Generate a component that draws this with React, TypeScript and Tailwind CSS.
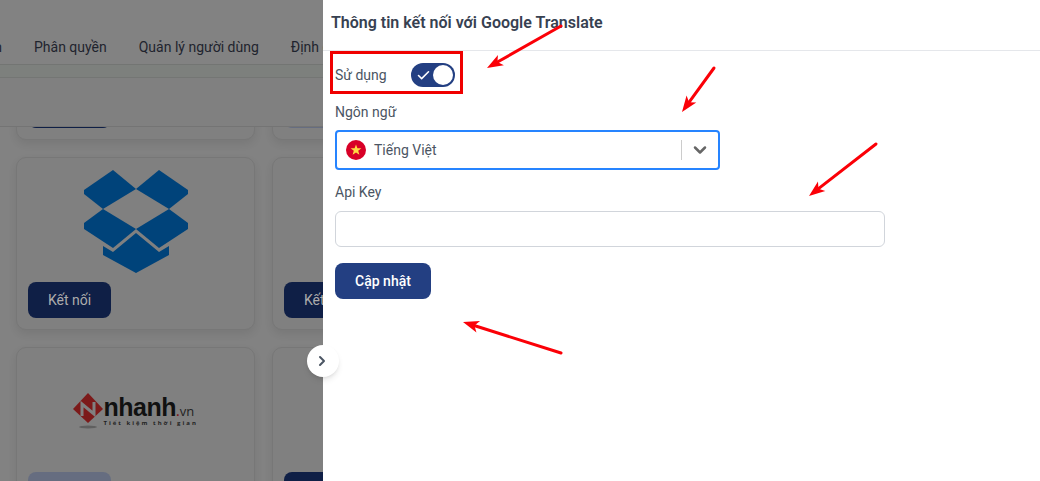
import React from "react";
import { Check, ChevronDown, ChevronRight } from "lucide-react";

const font = { fontFamily: "Roboto, sans-serif" };

function Dropbox() {
  return (
    <svg width="104" height="104" viewBox="0 0 104 104" fill="#00437a">
      <polygon points="29,0 0,20 0,24 19,39 52,19" />
      <polygon points="75,0 52,19 85,39 104,24 104,20" />
      <polygon points="19,39 0,53 0,59 29,78 52,59" />
      <polygon points="85,39 52,59 75,78 104,59 104,53" />
      <polygon points="52,63 29,82 19,76 19,85 52,103 85,85 85,76 75,82" />
    </svg>
  );
}

function Nhanh() {
  return (
    <div className="flex items-start" style={{ width: 126 }}>
      <svg width="31" height="37" viewBox="0 0 31 37" className="shrink-0">
        <polygon points="15,0 30,16 15,30 0,16" fill="#7c1a1a" />
        <path d="M9,23 L9,11 L21,21 L21,9" fill="none" stroke="#808080" strokeWidth="3" />
        <ellipse cx="15" cy="34" rx="9" ry="1.5" fill="#5f5f5f" />
      </svg>
      <div className="flex flex-col pt-[2px]">
        <div className="flex items-baseline h-[24px] leading-[24px] text-[#111111]">
          <span className="text-[25px] font-bold tracking-[-0.5px]" style={{ fontFamily: "'Liberation Sans', sans-serif" }}>nhanh</span>
          <span className="text-[13px] text-[#7c1a1a] font-bold">.</span>
          <span className="text-[13px] text-[#222222]" style={{ fontFamily: "'Open Sans', sans-serif" }}>vn</span>
        </div>
        <span className="text-[6px] leading-[8px] font-bold tracking-[2px] text-[#222222] whitespace-nowrap" style={{ fontFamily: "'Open Sans', sans-serif" }}>Tiết kiệm thời gian</span>
      </div>
    </div>
  );
}

function Card({ logo, btn = "bg-[#0f1f46]", label = "Kết nối", logoClass = "" }: { logo?: React.ReactNode; btn?: string; label?: string; logoClass?: string }) {
  return (
    <div className="h-[173px] rounded-[10px] border border-[#777777] bg-[#808080] shadow-[0_4px_8px_rgba(0,0,0,0.08)] p-[11px] flex flex-col justify-end relative">
      <div className={`flex-1 flex justify-center ${logoClass}`}>{logo}</div>
      <div className={`w-[83px] h-9 rounded-lg flex items-center justify-center text-sm text-[#acacac] whitespace-nowrap overflow-hidden ${btn}`}>{label}</div>
    </div>
  );
}

function Arrow({ x1, y1, x2, y2 }: { x1: number; y1: number; x2: number; y2: number }) {
  const dx = x2 - x1;
  const dy = y2 - y1;
  const len = Math.hypot(dx, dy);
  const ux = dx / len;
  const uy = dy / len;
  const nx = -uy;
  const ny = ux;
  const p = (along: number, side: number) => `${x2 - ux * along + nx * side},${y2 - uy * along + ny * side}`;
  return (
    <>
      <line x1={x1} y1={y1} x2={x2 - ux * 10} y2={y2 - uy * 10} stroke="#fb0007" strokeWidth="3" strokeLinecap="round" />
      <polygon points={`${x2},${y2} ${p(16, 6)} ${p(12, 0)} ${p(16, -6)}`} fill="#fb0007" />
    </>
  );
}

export default function App() {
  return (
    <div className="relative h-[481px] w-[1040px] overflow-hidden flex bg-[#828282]" style={font}>
      <div className="w-[323px] shrink-0 flex flex-col overflow-hidden">
        <div className="h-[65px] shrink-0 border-b border-[#737573] flex items-end pb-[7px] gap-8 text-sm text-[#1f242e] whitespace-nowrap">
          <div className="w-[2px] overflow-hidden flex justify-end shrink-0"><span>Thông tin</span></div>
          <span>Phân quyền</span>
          <span>Quản lý người dùng</span>
          <span>Định danh</span>
        </div>
        <div className="h-[13px] shrink-0 border-b border-[#747674] bg-[#7d807d]" />
        <div className="h-[49px] shrink-0 border-b border-[#747474] bg-[#808080]" />
        <div className="flex-1 overflow-hidden pl-4">
          <div className="grid grid-cols-[239px_239px] gap-x-[17px] gap-y-[17px] -mt-[160px]">
            <Card />
            <Card btn="bg-[#666d80]" />
            <Card logo={<Dropbox />} logoClass="pt-[1px]" />
            <Card />
            <Card logo={<Nhanh />} logoClass="pt-[34px]" btn="bg-[#666d80]" />
            <Card />
          </div>
        </div>
      </div>

      <div className="flex-1 bg-white flex flex-col">
        <div className="h-[51px] border-b border-[#e5e7eb] pl-2 pt-[13px] text-[16px] leading-[20px] font-semibold text-[#374151]">
          Thông tin kết nối với Google Translate
        </div>
        <div className="pl-3 flex flex-col items-start text-sm text-[#4b5563]">
          <div className="h-6 mt-3 flex items-center">
            <span className="w-[76px]">Sử dụng</span>
            <div className="w-11 h-6 rounded-full bg-[#233f82] relative flex items-center">
              <Check className="ml-[5px] text-white" size={15} strokeWidth={2.5} />
              <div className="absolute right-[2px] top-[2px] w-5 h-5 rounded-full bg-white" />
            </div>
          </div>
          <div className="mt-[15px] h-5 leading-5">Ngôn ngữ</div>
          <div className="mt-[8px] w-[385px] h-10 rounded border-2 border-[#2684ff] flex items-center pl-[9px]">
            <svg width="20" height="20" viewBox="0 0 20 20" className="shrink-0">
              <circle cx="10" cy="10" r="10" fill="#d80027" />
              <polygon fill="#ffda44" points="10,4.5 11.4,8.3 15.4,8.3 12.2,10.8 13.4,14.7 10,12.4 6.6,14.7 7.8,10.8 4.6,8.3 8.6,8.3" />
            </svg>
            <span className="ml-[8px] flex-1">Tiếng Việt</span>
            <div className="w-px h-5 bg-[#cccccc]" />
            <ChevronDown className="ml-[8px] mr-[8px] text-[#666666]" size={20} strokeWidth={3} />
          </div>
          <div className="mt-[12px] h-5 leading-5">Api Key</div>
          <div className="mt-[9px] w-[550px] h-9 rounded-md border border-[#d1d5db] bg-white" />
          <div className="mt-4 w-24 h-9 rounded-lg bg-[#233f82] text-white font-medium flex items-center justify-center">Cập nhật</div>
        </div>
      </div>

      <div className="absolute left-[307px] top-[345px] w-8 h-8 rounded-full bg-white shadow-md flex items-center justify-center">
        <ChevronRight className="text-[#4b5563] -ml-[2px]" size={16} strokeWidth={3} />
      </div>
      <div className="absolute left-[330px] top-[51px] w-[133px] h-[43px] border-[3px] border-[#f00000] pointer-events-none" />
      <svg className="absolute left-0 top-0 pointer-events-none" width="1040" height="481">
        <Arrow x1={561} y1={26} x2={487} y2={68} />
        <Arrow x1={714} y1={68} x2={682} y2={112} />
        <Arrow x1={876} y1={144} x2={809} y2={196} />
        <Arrow x1={561} y1={353} x2={463} y2={322} />
      </svg>
    </div>
  );
}
